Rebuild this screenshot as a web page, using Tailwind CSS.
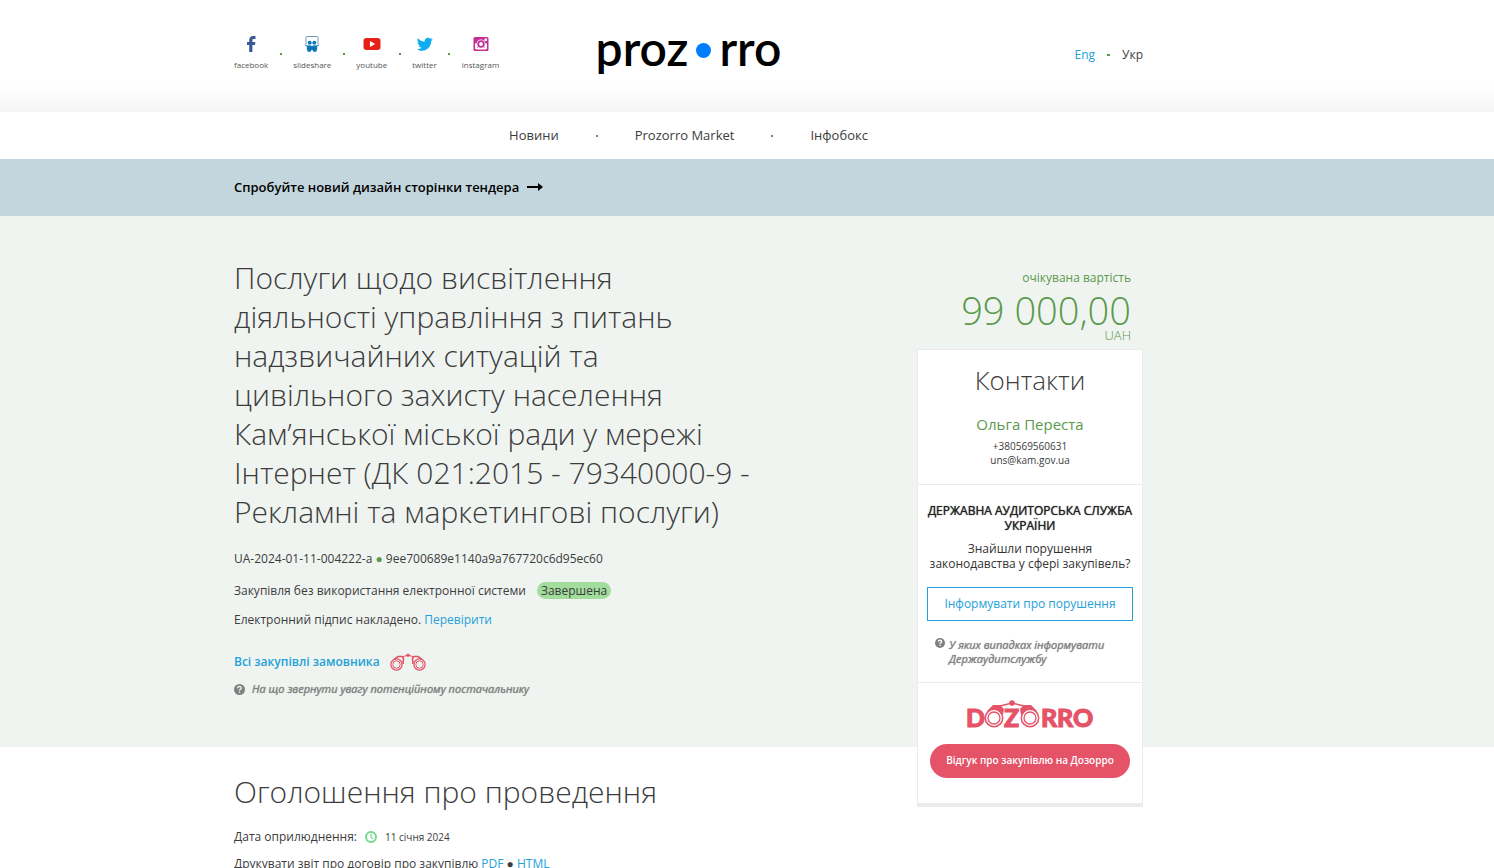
<!DOCTYPE html>
<html lang="uk">

<head>
    <meta charset="UTF-8">
    <meta name="viewport" content="width=device-width, initial-scale=1.0">
    <script src="https://cdn.jsdelivr.net/npm/@tailwindcss/browser@4"></script>
    <title>Prozorro</title>
</head>

<body class="bg-white font-['Open_Sans','Noto_Sans',sans-serif] text-xs text-[#3c3c3c] overflow-x-hidden">
    <header>
        <div class="h-28 bg-linear-to-b from-white from-75% to-[#f5f5f5]">
            <div class="max-w-[1026px] mx-auto pr-[117px] grid grid-cols-[1fr_auto_1fr] items-start">
                <ul class="flex pt-9 text-[8px] leading-3 text-[#555]">
                    <li>
                        <a href="#" class="flex flex-col items-center gap-[7px]">
                            <svg class="h-4 w-4" viewBox="0 0 16 16"><path fill="#3b5998" d="M6.200 16V9H4V6h2.200V4.200C6.200 1.700 7.600 0 10 0h2.500v3h-1.600C9.700 3 9.400 3.500 9.400 4.400V6h3l-.4 3H9.400v7z"/></svg>
                            facebook
                        </a>
                    </li>
                    <li class="w-[25px] pt-[17px]"><span class="block w-0.5 h-0.5 mx-auto bg-[#5a9a4c]"></span></li>
                    <li>
                        <a href="#" class="flex flex-col items-center gap-[7px]">
                            <svg class="h-4 w-4" viewBox="0 0 16 16">
                                <path fill="none" stroke="#6c9cb8" stroke-width="1" d="M2 8V1.200Q2 .5 2.700.5h10.600q.7 0 .7.700V8"/>
                                <path fill="#0d78b5" d="M.3 7.800q1.700 2 4.700 1.600 2.200-.3 2.500.6h1q.3-.9 2.500-.6 3 .4 4.700-1.600-.7 2-2.700 2.900.9 4.300-1.800 5.200Q9.200 16.300 8.500 14h-1q-.7 2.300-2.700 1.900Q2.100 15 3 10.700 1 9.800.3 7.800z"/>
                                <circle cx="5.700" cy="6.700" r="2" fill="#0d78b5"/><circle cx="10.300" cy="6.700" r="2" fill="#0d78b5"/>
                            </svg>
                            slideshare
                        </a>
                    </li>
                    <li class="w-[25px] pt-[17px]"><span class="block w-0.5 h-0.5 mx-auto bg-[#5a9a4c]"></span></li>
                    <li>
                        <a href="#" class="flex flex-col items-center gap-[7px]">
                            <svg class="h-4 w-[18px]" viewBox="0 0 18 16"><rect x=".5" y="2" width="17" height="12" rx="3" fill="#e52119"/><path fill="#fff" d="M7 5v6l5.200-3z"/></svg>
                            youtube
                        </a>
                    </li>
                    <li class="w-[25px] pt-[17px]"><span class="block w-0.5 h-0.5 mx-auto bg-[#5a9a4c]"></span></li>
                    <li>
                        <a href="#" class="flex flex-col items-center gap-[7px]">
                            <svg class="h-4 w-4" viewBox="0 0 24 24"><path fill="#0dabf0" d="M23.600 4.900c-.9.400-1.800.7-2.800.8 1-.6 1.800-1.600 2.100-2.700-.9.600-2 1-3.100 1.200a4.900 4.900 0 0 0-8.300 4.400C7.500 8.400 3.900 6.500 1.500 3.500a4.900 4.900 0 0 0 1.500 6.500c-.8 0-1.500-.2-2.200-.6v.1c0 2.400 1.700 4.300 3.900 4.800-.7.200-1.500.2-2.200.1.600 1.900 2.400 3.300 4.600 3.400A9.800 9.800 0 0 1 0 19.800 13.800 13.800 0 0 0 21.200 7.400c.9-.7 1.800-1.500 2.400-2.500z"/></svg>
                            twitter
                        </a>
                    </li>
                    <li class="w-[25px] pt-[17px]"><span class="block w-0.5 h-0.5 mx-auto bg-[#5a9a4c]"></span></li>
                    <li>
                        <a href="#" class="flex flex-col items-center gap-[7px]">
                            <svg class="h-4 w-4" viewBox="0 0 16 16"><rect x=".5" y="1" width="15" height="14" rx="1.500" fill="#c22f92"/><path fill="#fff" d="M2 7.500h2V13H2zM12 7.500h2V13h-2zM3 11.500h10V13.500H3zM11.500 2.500H14V5h-2.500z"/><circle cx="8" cy="8" r="4.500" fill="#fff"/><circle cx="8" cy="8" r="2.800" fill="none" stroke="#c22f92" stroke-width="1.800"/></svg>
                            instagram
                        </a>
                    </li>
                </ul>
                <a href="#" class="flex items-center pt-5 font-['Lato',sans-serif] font-semibold text-[48px] leading-[56px] text-black">
                    proz<span class="w-[15px] h-[15px] mx-2 mt-1 rounded-full bg-[#007dff]"></span>rro
                </a>
                <div class="flex items-center justify-end pt-[46px] leading-[18px]">
                    <a href="#" class="text-[#23a1d8]">Eng</a>
                    <span class="w-[3px] h-0.5 mx-3 bg-[#5a9a4c]"></span>
                    <a href="#">Укр</a>
                </div>
            </div>
        </div>
        <nav class="h-[47px]">
            <div class="max-w-[1026px] h-full mx-auto pr-[117px] flex justify-center items-center text-[13px]">
                <a href="#">Новини</a>
                <span class="w-0.5 h-0.5 mx-[37px] bg-[#5a9a4c]"></span>
                <a href="#">Prozorro Market</a>
                <span class="w-0.5 h-0.5 mx-[37px] bg-[#5a9a4c]"></span>
                <a href="#">Інфобокс</a>
            </div>
        </nav>
    </header>

    <div class="bg-[#c3d6dd]">
        <div class="max-w-[1026px] h-[57px] mx-auto flex items-center">
            <a href="#" class="flex items-center gap-2 text-[13px] font-semibold text-black">
                Спробуйте новий дизайн сторінки тендера
                <svg class="w-4 h-2" viewBox="0 0 16 8"><path d="M0 3h11V0l5 4-5 4V5H0z"/></svg>
            </a>
        </div>
    </div>

    <main>
        <section class="bg-[#f0f4f1]">
            <div class="max-w-[1026px] mx-auto pr-[117px] flex justify-between items-start">
                <div class="w-[520px] pt-[42px] pb-[49px]">
                    <h1 class="text-[30px] leading-[39px] font-light">Послуги щодо висвітлення діяльності управління з питань надзвичайних ситуацій та цивільного захисту населення Кам’янської міської ради у мережі Інтернет (ДК 021:2015 - 79340000-9 - Рекламні та маркетингові послуги)</h1>
                    <p class="mt-[19px] leading-[18px]">UA-2024-01-11-004222-a <span class="text-[#5a9a4c]">●</span> 9ee700689e1140a9a767720c6d95ec60</p>
                    <p class="mt-[14px] leading-[18px]">Закупівля без використання електронної системи
                        <span class="ml-2 px-1 rounded-full bg-[#a3dd9d]">Завершена</span>
                    </p>
                    <p class="mt-[11px] leading-[18px]">Електронний підпис накладено. <a href="#" class="text-[#23a1d8]">Перевірити</a></p>
                    <p class="mt-6 flex items-center gap-[10px] leading-[18px]">
                        <a href="#" class="font-semibold text-[#23a1d8]">Всі закупівлі замовника</a>
                        <svg class="w-9 h-[18px]" viewBox="0 0 36 18" fill="none" stroke="#e55368">
                            <circle cx="6.500" cy="11.500" r="5.600" stroke-width="1.300"/><circle cx="6.500" cy="11.500" r="3.700"/>
                            <circle cx="29.500" cy="11.500" r="5.600" stroke-width="1.300"/><circle cx="29.500" cy="11.500" r="3.700"/>
                            <path d="M4 6.500 8 3.500h4l1.500 2-.5 5.500M32 6.500l-4-3h-4l-1.500 2 .5 5.500" stroke-width="1.600"/>
                            <path d="M12 4l6-2 6 2"/><circle cx="18" cy="2.200" r="1.700" fill="#e55368" stroke="none"/>
                        </svg>
                    </p>
                    <p class="mt-[10px] flex items-center gap-[7px] text-[11px] leading-4 italic text-[#808080] [text-shadow:0_0_1px_#808080]">
                        <svg class="w-[11px] h-[11px]" viewBox="0 0 11 11"><circle cx="5.500" cy="5.500" r="5.500" fill="#808080"/><path d="M3.600 4.200q.1-1.800 1.900-1.800 1.800.1 1.800 1.600 0 .8-1 1.300-.8.500-.8 1.200M5.500 7.500v1.300" fill="none" stroke="#f0f4f1" stroke-width="1.400"/></svg>
                        <a href="#">На що звернути увагу потенційному постачальнику</a>
                    </p>
                </div>

                <aside class="w-[226px] -mb-[60px] pt-[54px]">
                    <div class="pr-3 text-right text-[#5a9a4c]">
                        <div class="text-xs leading-4">очікувана вартість</div>
                        <div class="mt-[5px] text-[38px] leading-[38px] font-light">99 000,00</div>
                        <div class="mb-2 text-[13px] leading-3 font-light">UAH</div>
                    </div>
                    <div class="bg-white border border-b-4 border-[#ebebeb] text-center">
                        <div class="h-[135px] pt-3 border-b border-[#ebebeb]">
                            <h2 class="text-[26px] leading-9 font-light">Контакти</h2>
                            <div class="mt-4 text-[15px] leading-5 text-[#5a9a4c]">Ольга Переста</div>
                            <div class="mt-[5px] text-[10px] leading-[14px]">+380569560631<br><a href="#">uns@kam.gov.ua</a></div>
                        </div>
                        <div class="h-[198px] px-[9px] pt-[18px] border-b border-[#ebebeb]">
                            <h3 class="leading-[15px] text-[#222] [text-shadow:0_0_1px_#222]">ДЕРЖАВНА АУДИТОРСЬКА СЛУЖБА УКРАЇНИ</h3>
                            <p class="mt-2 leading-[15px] text-[#333]">Знайшли порушення законодавства у сфері закупівель?</p>
                            <button type="button" class="w-full h-[34px] mt-4 border border-[#23a1d8] text-[#23a1d8]">Інформувати про порушення</button>
                            <p class="mt-[17px] pl-2 flex items-start gap-1 text-left text-[11px] leading-[14px] italic text-[#808080] [text-shadow:0_0_1px_#808080]">
                                <svg class="w-[10px] h-[10px] shrink-0" viewBox="0 0 11 11"><circle cx="5.500" cy="5.500" r="5.500" fill="#808080"/><path d="M3.600 4.200q.1-1.800 1.900-1.800 1.800.1 1.800 1.600 0 .8-1 1.300-.8.500-.8 1.200M5.500 7.500v1.300" fill="none" stroke="#fff" stroke-width="1.400"/></svg>
                                <a href="#">У яких випадках інформувати Держаудитслужбу</a>
                            </p>
                        </div>
                        <div class="px-3 pt-[17px] pb-[25px]">
                            <svg class="w-32 h-7 mx-auto overflow-visible" viewBox="0 0 128 28" fill="#e55368" stroke="#e55368">
                                <path d="M21 11l6-6h7l4 4-1 6M71 11l-6-6h-7l-4 4 1 6" stroke="none"/>
                                <path d="M34 6l12-3 12 3" fill="none" stroke-width="1.300"/>
                                <circle cx="46" cy="3" r="2.800" stroke="none"/>
                                <g fill="#fff">
                                    <circle cx="28" cy="18" r="8.700" stroke-width="1.500"/><circle cx="28" cy="18" r="6" stroke-width="1.300"/>
                                    <circle cx="64" cy="18" r="8.700" stroke-width="1.500"/><circle cx="64" cy="18" r="6" stroke-width="1.300"/>
                                </g>
                                <g font-family="Lato, sans-serif" font-weight="900" font-size="25" stroke-width="1">
                                    <text x="0" y="27">D</text>
                                    <text x="38" y="27">Z</text>
                                    <text x="75" y="27">R</text><text x="91" y="27">R</text><text x="107" y="27">O</text>
                                </g>
                            </svg>
                            <button type="button" class="w-full h-[34px] mt-4 rounded-full bg-[#e55368] text-[10px] font-semibold text-white">Відгук про закупівлю на Дозорро</button>
                        </div>
                    </div>
                </aside>
            </div>
        </section>

        <section class="max-w-[1026px] mx-auto pt-[25px]">
            <h2 class="text-[30px] leading-[39px] font-light">Оголошення про проведення</h2>
            <p class="mt-[17px] flex items-center leading-[18px]">
                Дата оприлюднення:
                <svg class="w-3 h-3 ml-2 mr-2" viewBox="0 0 12 12" fill="none" stroke="#76d98c" stroke-width="2"><circle cx="6" cy="6" r="5"/><path d="M6 3v3.500l2 1.300" stroke-width="1.300"/></svg>
                <span class="text-[10px]">11 січня 2024</span>
            </p>
            <p class="mt-[9px] leading-[18px]">Друкувати звіт про договір про закупівлю <a href="#" class="text-[#23a1d8]">PDF</a> ● <a href="#" class="text-[#23a1d8]">HTML</a></p>
        </section>
    </main>
</body>

</html>
